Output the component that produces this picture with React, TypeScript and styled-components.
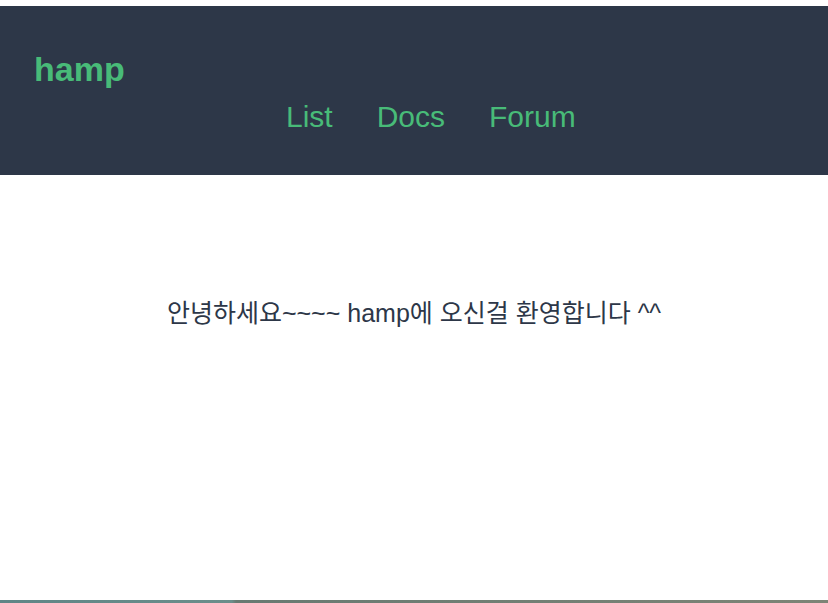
import React from 'react';
import styled, { createGlobalStyle } from 'styled-components';

const GlobalStyle = createGlobalStyle`
  html, body {
    margin: 0;
    padding: 0;
    background: #ffffff;
  }
  body {
    font-family: "Liberation Sans", Arial, "Noto Sans CJK KR", sans-serif;
  }
`;

const Page = styled.div`
  display: flex;
  flex-direction: column;
  height: 603px;
  padding-top: 6px;
  box-sizing: border-box;
`;

const Header = styled.header`
  display: flex;
  flex-direction: column;
  height: 169px;
  background-color: #2d3748;
  padding: 46px 0 0 34px;
  box-sizing: border-box;
`;

const Logo = styled.a`
  color: #48bb78;
  font-size: 34px;
  font-weight: 700;
  line-height: 1;
  text-decoration: none;
`;

const Nav = styled.nav`
  display: flex;
  gap: 44px;
  margin: 16px 0 0 252px;
`;

const NavLink = styled.a`
  color: #48bb78;
  font-size: 30px;
  line-height: 1;
  text-decoration: none;
`;

const Main = styled.main`
  flex: 1;
  display: flex;
  justify-content: center;
  padding-top: 123px;
`;

const Welcome = styled.p`
  margin: 0;
  color: #2d3748;
  font-size: 25px;
  line-height: 1.2;
  font-family: "Liberation Sans", Arial, "Noto Sans CJK KR", sans-serif;
`;

const FooterEdge = styled.div`
  height: 3px;
  background: linear-gradient(to right, #5f8586 0%, #6b8e8b 28%, #687a72 28.5%, #7d8476 100%);
`;

const links = ['List', 'Docs', 'Forum'];

export default function App() {
  return (
    <>
      <GlobalStyle />
      <Page>
        <Header>
          <Logo href="#">hamp</Logo>
          <Nav>
            {links.map((l) => (
              <NavLink key={l} href="#">{l}</NavLink>
            ))}
          </Nav>
        </Header>
        <Main>
          <Welcome>안녕하세요~~~~ hamp에 오신걸 환영합니다 ^^</Welcome>
        </Main>
        <FooterEdge />
      </Page>
    </>
  );
}
